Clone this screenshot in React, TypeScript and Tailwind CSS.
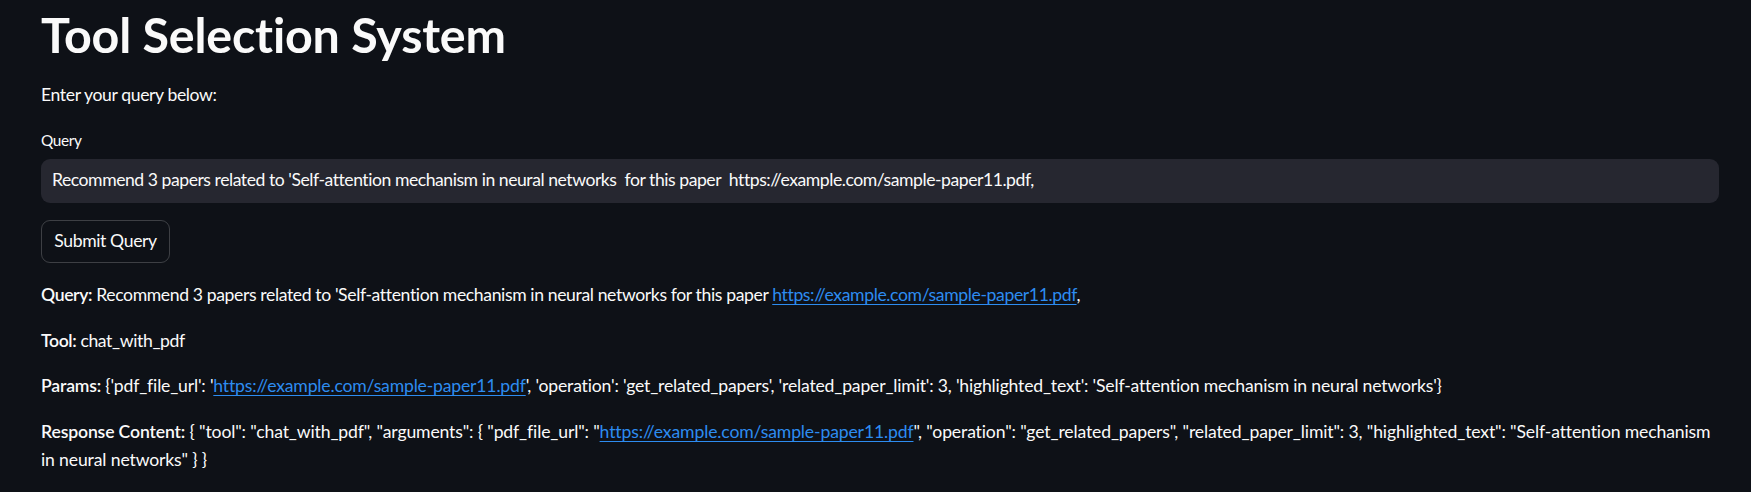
import React from "react";

const LINK = "https://example.com/sample-paper11.pdf";

function A({ children }: { children: React.ReactNode }) {
  return <span className="text-[#2d8cf0] underline underline-offset-[3px] decoration-1">{children}</span>;
}

export default function App() {
  return (
    <div
      className="min-h-screen bg-[#0e1117] text-[#fafafa] pl-[41px] pr-[32px]"
      style={{ fontFamily: "Lato, 'Noto Sans', sans-serif" }}
    >
      <h1 className="pt-[5px] text-[48.4px] leading-[1.2] font-bold tracking-[-0.2px]">Tool Selection System</h1>
      <div className="tracking-[-0.38px]">
        <p className="mt-[18px] text-[17.6px] leading-[1.6]">Enter your query below:</p>
        <div className="mt-[19px] text-[15.4px] leading-[1.6]">Query</div>
        <div className="mt-[6px] h-[44px] rounded-[9px] bg-[#262730] flex items-center pl-[11px] pb-[2px]">
          <span className="text-[17.6px] leading-[1.6] whitespace-pre tracking-[-0.46px]">
            Recommend 3 papers related to 'Self-attention mechanism in neural networks  for this paper  https://example.com/sample-paper11.pdf,
          </span>
        </div>
        <div className="mt-[17px] w-[129px] h-[43px] rounded-[9px] border border-[rgba(250,250,250,0.2)] flex items-center justify-center text-[17.6px] leading-[1.6]">
          Submit Query
        </div>
        <div className="mt-[18px] text-[17.6px] leading-[1.6]">
          <p className="mb-[17.6px]">
            <b className="font-semibold">Query:</b> Recommend 3 papers related to 'Self-attention mechanism in neural networks for this paper <A>{LINK}</A>,
          </p>
          <p className="mb-[17.6px]">
            <b className="font-semibold">Tool:</b> chat_with_pdf
          </p>
          <p className="mb-[17.6px] tracking-[-0.18px]">
            <b className="font-semibold">Params:</b> {"{'pdf_file_url': '"}<A>{LINK}</A>{"', 'operation': 'get_related_papers', 'related_paper_limit': 3, 'highlighted_text': 'Self-attention mechanism in neural networks'}"}
          </p>
          <p className="mb-[17.6px] tracking-[-0.14px]">
            <span className="whitespace-nowrap">
              <b className="font-semibold">Response Content:</b> {'{ "tool": "chat_with_pdf", "arguments": { "pdf_file_url": "'}<A>{LINK}</A>{'", "operation": "get_related_papers", "related_paper_limit": 3, "highlighted_text": "Self-attention mechanism'}
            </span>
            <br />
            {'in neural networks" } }'}
          </p>
        </div>
      </div>
    </div>
  );
}
